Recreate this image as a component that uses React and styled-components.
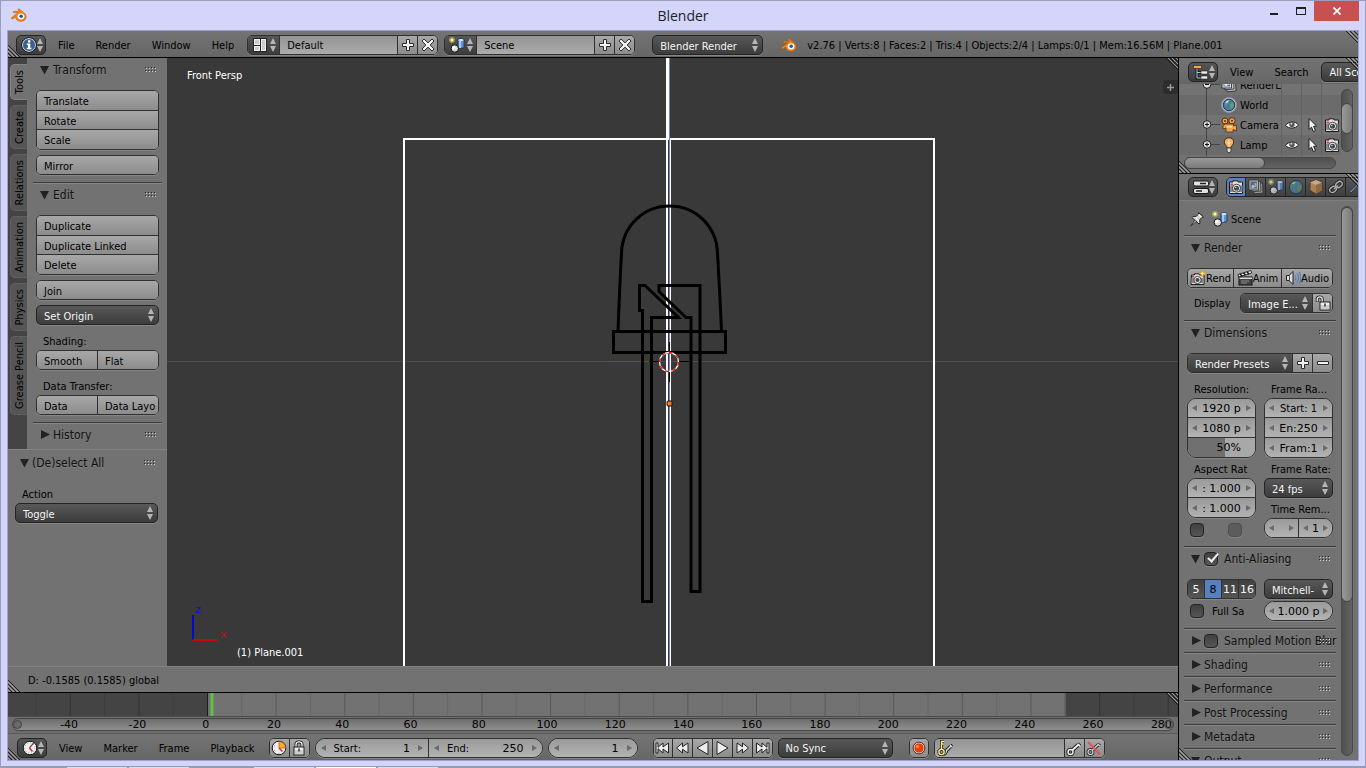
import { useState } from "react"
import styled, { createGlobalStyle, css } from "styled-components"

const condensed = '"DejaVu Sans Condensed", "DejaVu Sans", sans-serif'
const regular = '"DejaVu Sans", sans-serif'

const GlobalStyle = createGlobalStyle`
    * {
        box-sizing: border-box;
    }
    body {
        margin: 0;
        background: #d4d5fa;
        overflow: hidden;
    }
    button,
    input,
    select {
        margin: 0;
        padding: 0;
        border: 0;
        background: none;
        color: inherit;
        font: inherit;
        border-radius: 0;
        outline: none;
    }
    h1,
    h2,
    p {
        margin: 0;
        font-weight: normal;
    }
`

/* ---------- icons ---------- */

const Svg = styled.svg`
    display: block;
    flex: none;
    width: ${p => p.$w || 16}px;
    height: ${p => p.$h || 16}px;
`

const shapes = {
    info: (
        <>
            <circle cx='8' cy='8' r='6.5' fill='#3c5f92' stroke='#dfe6ef' />
            <circle cx='8' cy='8' r='7.4' fill='none' stroke='#111' strokeWidth='.7' />
            <path d='M7 3.3h2.3v2.2H7zM5.8 6.6h3.5v4.2h1.2v1.5H5.8v-1.5H7V8H5.8z' fill='#fff' />
        </>
    ),
    layout: (
        <>
            <rect x='1' y='1' width='14' height='14' rx='1' fill='#222' />
            <path d='M2 2h6v6H2zM2 9h6v5H2zM9 2h5v12H9z' fill='#f0f0f0' />
            <path d='M3 3h4v4H3zM3 10h4v3H3zM10 3h3v10h-3z' fill='#cdcdcd' />
        </>
    ),
    scene: (
        <>
            <path d='M9 3c0-1.500 6-1.500 6 0v7c0 1.600-6 1.600-6 0z' fill='#5f93da' stroke='#182c4c' strokeWidth='.8' />
            <path d='M10 4h2v7h-2z' fill='#a6c8f4' />
            <ellipse cx='12' cy='3' rx='2.700' ry='1' fill='#dce9fa' />
            <circle cx='5.800' cy='11.500' r='3.700' fill='#ddd' stroke='#111' />
            <circle cx='4.700' cy='10.200' r='1.500' fill='#fff' />
            <circle cx='3' cy='3' r='3' fill='#c9c44f' opacity='.6' />
            <circle cx='3' cy='3' r='1.500' fill='#fffcb5' />
        </>
    ),
    blender: (
        <>
            <path
                d='M.6 10.600 7 5.700H2.800c-.9 0-.8-1.300 0-1.400h5.700L7.100 3c-.6-.6.4-1.600 1.200-1l5 4c3.200 2.700 2.200 7.700-2.600 8.300-3.400.4-5.900-1.500-6.200-4.300l-2.300 1.800c-1 .6-2.300-.4-1.600-1.200z'
                fill='#f28418'
                stroke='#b35508'
                strokeWidth='.5'
            />
            <ellipse cx='10' cy='9.400' rx='3.400' ry='3' fill='#fff' />
            <ellipse cx='10.200' cy='9.300' rx='1.800' ry='1.700' fill='#1f5899' />
        </>
    ),
    tree: (
        <>
            <path d='M4 4v10h4M4 8.500h4' stroke='#1a1a1a' strokeWidth='3' fill='none' />
            <path d='M4 4v10h5M4 8.500h5' stroke='#a9c7e8' fill='none' />
            <rect x='.5' y='1.500' width='8' height='3' fill='#f3a64d' stroke='#222' strokeWidth='.6' />
            <rect x='8' y='7' width='6.500' height='3' fill='#eee' stroke='#222' strokeWidth='.6' />
            <rect x='8' y='12' width='6.500' height='3' fill='#eee' stroke='#222' strokeWidth='.6' />
        </>
    ),
    sliders: (
        <>
            <rect x='.5' y='2' width='15' height='5' rx='1.500' fill='#e2e2e2' stroke='#171717' />
            <rect x='.5' y='9.500' width='15' height='5' rx='1.500' fill='#e2e2e2' stroke='#171717' />
            <path d='M7 4.500h6M3 12h6' stroke='#222' strokeWidth='1.600' />
        </>
    ),
    globe: (
        <>
            <circle cx='8' cy='8' r='6.600' fill='#4c7fb5' stroke='#20303f' />
            <path d='M3 5c1.500-2 4-2.500 5-2l-1 2-2 1v2L3.500 9C2.600 8 2.500 6 3 5zM9 7l3-1.500 2 2-1 3-2.500 2.500L9 10zM5 10l2 1v2l-2-.5z' fill='#5f9a55' />
            <path d='M4 5c1-1.500 2.500-2 3.500-2.200L6 5z' fill='#e9f2f5' opacity='.8' />
        </>
    ),
    world: (
        <>
            <circle cx='8' cy='8' r='7.500' fill='#b9bbd0' stroke='#8e91aa' />
            <circle cx='8' cy='8' r='5.800' fill='#4679a8' stroke='#253c54' />
            <path d='M4 5.500c1.500-2 3.500-2.200 4.500-1.800L7 6 5.500 7l.5 2-1.500.5zM9 7l2.500-1.500L13 8l-1.500 3L9.500 12z' fill='#68a25a' />
            <path d='M4.300 5.800C5.500 4 7 3.500 8 3.500L6.500 5.500z' fill='#fff' />
        </>
    ),
    movie: (
        <>
            <circle cx='4' cy='4' r='3' fill='#eaa056' stroke='#53300b' />
            <circle cx='11' cy='3.800' r='3.200' fill='#eaa056' stroke='#53300b' />
            <path d='M4.500 7h8v2l3-1v6l-3.500-1.500V15h-7v-4L2 12V8.500z' fill='#f1a452' stroke='#53300b' strokeWidth='.8' />
            <path d='M6 9h5v1.500H6z' fill='#ffdcae' />
            <circle cx='4' cy='4' r='1' fill='#5b3510' />
            <circle cx='11' cy='3.800' r='1' fill='#5b3510' />
        </>
    ),
    lamp: (
        <>
            <path d='M8 .7c-3 0-5 2.200-4.700 4.800C3.500 8 6 8.500 6 11h4c0-2.500 2.500-3 2.700-5.500C13 2.900 11 .7 8 .7z' fill='#f1b169' stroke='#4b2c0b' />
            <path d='M8 2.500v7M6 5l2 2 2-2' stroke='#fde7c7' fill='none' />
            <path d='M6 11h4v3l-1 1.500H7L6 14z' fill='#ddd' stroke='#333' strokeWidth='.8' />
        </>
    ),
    cube: (
        <>
            <path d='m8 1 6 2.500v8L8 15l-6-3.500v-8z' fill='#d8985a' stroke='#3c2711' strokeWidth='.8' />
            <path d='m8 1 6 2.500L8 6 2 3.500z' fill='#f3d0a5' />
            <path d='M8 6v9l6-3.500v-8z' fill='#b0773c' />
        </>
    ),
    eye: (
        <>
            <path d='M1.500 8.500C4 4.500 11.500 3.500 14.500 8 11 12 5 12 1.500 8.500z' fill='#f5f5f5' stroke='#222' />
            <circle cx='8' cy='7.600' r='2.700' fill='#555' />
            <circle cx='7.400' cy='6.800' r='1' fill='#ddd' />
        </>
    ),
    pointer: <path d='M5 1.500v11l2.500-2.300 1.800 4.300 2.200-1-1.900-4.100 3-.4z' fill='#f3f3f3' stroke='#1d1d1d' />,
    photo: (
        <>
            <path d='M2 3h3V1.800h5V3h4.500v11.500h-13V3z' fill='#ddd' stroke='#1c1c1c' />
            <path d='M2 6.500h12.500V13H2z' fill='#888' />
            <circle cx='8.500' cy='9.200' r='4' fill='#eee' stroke='#222' strokeWidth='.8' />
            <circle cx='8.500' cy='9.200' r='2.500' fill='#40474f' />
            <circle cx='7.800' cy='8.500' r='.8' fill='#b5c6d6' />
            <path d='M2.500 4.500h2.500v1.800H2.500z' fill='#e33' />
        </>
    ),
    photoNew: (
        <>
            <path d='M1.500 5h3V3.800h5V5H14v9.500H1z' fill='#ddd' stroke='#1c1c1c' />
            <path d='M1.500 8h12v5h-12z' fill='#888' />
            <circle cx='7.500' cy='10' r='3.600' fill='#eee' stroke='#222' strokeWidth='.8' />
            <circle cx='7.500' cy='10' r='2.100' fill='#40474f' />
            <path d='M2 6h2v1.600H2z' fill='#e33' />
            <path d='m12.500 0 1 2.500L16 3.500l-2.500 1-1 2.500-1-2.500-2.500-1 2.500-1z' fill='#ffeb75' stroke='#d69b1d' strokeWidth='.8' />
        </>
    ),
    images: (
        <>
            <path d='m5 5 9.500-1L15 14l-9 .8z' fill='#bbb' stroke='#222' strokeWidth='.8' />
            <path d='m3.500 3 9-.5.5 9.500-9 .8z' fill='#ccc' stroke='#222' strokeWidth='.8' />
            <rect x='1' y='1' width='9.500' height='10' fill='#ddd' stroke='#222' strokeWidth='.8' />
            <rect x='2.500' y='2.500' width='6.500' height='7' fill='#55789c' />
            <circle cx='5' cy='7.500' r='1.600' fill='#eee' />
            <path d='M6.500 4H8.500v4h-2z' fill='#b3d1f1' />
        </>
    ),
    link: (
        <>
            <g fill='none' stroke='#191919' strokeWidth='3.600'>
                <rect x='7.500' y='3' width='7' height='5' rx='2.500' transform='rotate(-38 11 5.500)' />
                <rect x='1.500' y='8' width='7' height='5' rx='2.500' transform='rotate(-38 5 10.500)' />
            </g>
            <g fill='none' stroke='#d5d5d5' strokeWidth='1.400'>
                <rect x='7.500' y='3' width='7' height='5' rx='2.500' transform='rotate(-38 11 5.500)' />
                <rect x='1.500' y='8' width='7' height='5' rx='2.500' transform='rotate(-38 5 10.500)' />
                <path d='m6 10 4-3.500' />
            </g>
        </>
    ),
    wrench: (
        <path
            d='M3 1v3.500L5 6.500l1.500-.3L14 14l1.500-1.500L8 5.500 8.200 3 6 1v3L4.500 4z'
            fill='#86a6d2'
            stroke='#1b2430'
            strokeWidth='.8'
            transform='matrix(-1 0 0 1 17 0)'
        />
    ),
    pin: (
        <>
            <path d='m1.500 15 5-6.500 1.800 1.500z' fill='#ddd' stroke='#222' strokeWidth='.8' />
            <path d='m9.500 1.500 5 4.500-1.800.5-2 2.300.3 3.400-1 .8L3 6.500l1-1 3.300-.2L9.500 3z' fill='#d3d3d3' stroke='#222' />
            <path d='m9.500 3.500 3 2.600M6.500 6.500l3 3' stroke='#fff' />
        </>
    ),
    clapper: (
        <>
            <path d='m1 4.500 13-4 .6 2.600-13 4z' fill='#eee' stroke='#111' strokeWidth='.8' />
            <path d='m3 4 2 2M6.500 3l2 2M10 2l2 2' stroke='#111' strokeWidth='1.600' />
            <rect x='2' y='7' width='13' height='8' fill='#444' stroke='#111' />
            <path d='M2.500 7.500H15V9H2.500z' fill='#ddd' />
            <path d='M4 11h8M4 13h6' stroke='#8a8a8a' />
        </>
    ),
    speaker: (
        <>
            <path d='M1.500 5.500h2.500l4-4v13l-4-4H1.500z' fill='#ddd' stroke='#222' />
            <path d='M4.500 5v6' stroke='#555' />
            <path d='M10 5.500c1 1.500 1 3.500 0 5M12 3.500c2 2.800 2 6.200 0 9M14 1.800c2.500 4 2.500 8.400 0 12.400' stroke='#4f82c9' strokeWidth='1.200' fill='none' />
        </>
    ),
    unlock: (
        <>
            <path d='M2.200 7V4.200c0-3 5-3 5 0V7' fill='none' stroke='#222' strokeWidth='3' />
            <path d='M2.200 6.500V4.200c0-3 5-3 5 0V7' fill='none' stroke='#eee' strokeWidth='1.300' />
            <rect x='5' y='7' width='10' height='8' fill='#eee' stroke='#222' />
            <path d='M6 11h8M6 13h8' stroke='#aaa' />
            <path d='M10 8.500v3' stroke='#333' strokeWidth='1.500' />
        </>
    ),
    lock: (
        <>
            <path d='M5 8V4.500c0-3.500 6-3.500 6 0V8' fill='none' stroke='#222' strokeWidth='3' />
            <path d='M5 8V4.500c0-3.500 6-3.500 6 0V8' fill='none' stroke='#eee' strokeWidth='1.300' />
            <rect x='3' y='7' width='10' height='8' fill='#eee' stroke='#222' />
            <path d='M4 11h8M4 13h8' stroke='#aaa' />
            <path d='M8 8.500v3' stroke='#333' strokeWidth='1.500' />
        </>
    ),
    clock: (
        <>
            <circle cx='8' cy='8' r='6.800' fill='#efefef' stroke='#181818' />
            <circle cx='8' cy='8' r='5.200' fill='none' stroke='#9a9a9a' strokeDasharray='1 2' />
            <path d='M11.500 3 7.500 8' stroke='#333' strokeWidth='1.200' fill='none' />
            <path d='m7.500 8 3 3.500' stroke='#d22' strokeWidth='1.400' />
        </>
    ),
    clockRange: (
        <>
            <circle cx='8' cy='8' r='6.800' fill='#efefef' stroke='#181818' />
            <path d='M8 8V1.500A6.500 6.500 0 0 1 14.500 8z' fill='#ffae22' stroke='#8c5505' strokeWidth='.6' />
            <path d='m8 8 3.500 3.500' stroke='#d22' strokeWidth='1.400' />
            <path d='M3.500 5.500v.8M3.500 10v.8M8 13v1' stroke='#888' />
        </>
    ),
    record: (
        <>
            <circle cx='8' cy='8' r='5.200' fill='#e64008' stroke='#f0ddd4' />
            <circle cx='8' cy='8' r='5.900' fill='none' stroke='#3a1407' strokeWidth='.8' />
            <circle cx='6.500' cy='6.500' r='1.600' fill='#ff8d55' />
        </>
    ),
    key: (
        <>
            <path d='m6 10.500 6.500-6m-1-.5 2.500 2' stroke='#222' strokeWidth='3.800' />
            <circle cx='4.500' cy='12' r='2.500' fill='none' stroke='#222' strokeWidth='3.400' />
            <path d='m6 10.500 6.500-6m-1-.5 2.500 2' stroke='#eee' strokeWidth='1.800' />
            <circle cx='4.500' cy='12' r='2.500' fill='none' stroke='#eee' strokeWidth='1.400' />
        </>
    ),
    keys: (
        <>
            <path d='M7 14c2 0 1.500-2 3-4l4-4m-1-1 2 2' stroke='#222' strokeWidth='3.600' fill='none' />
            <path d='M7 14c2 0 1.500-2 3-4l4-4m-1-1 2 2' stroke='#ddd' strokeWidth='1.500' fill='none' />
            <path d='M4.500 9.500V1.500h2.500M4.500 4h2' stroke='#3a3410' strokeWidth='3' fill='none' />
            <circle cx='4.500' cy='12' r='2.600' fill='none' stroke='#3a3410' strokeWidth='3.200' />
            <path d='M4.500 9.500V1.500h2.500M4.500 4h2' stroke='#efe69a' strokeWidth='1.300' fill='none' />
            <circle cx='4.500' cy='12' r='2.600' fill='none' stroke='#efe69a' strokeWidth='1.400' />
        </>
    ),
    keyOff: (
        <>
            <path d='m6 10.500 6.500-6m-1-.5 2.500 2' stroke='#333' strokeWidth='3.200' />
            <circle cx='4.500' cy='12' r='2.500' fill='none' stroke='#333' strokeWidth='3' />
            <path d='m6 10.500 6.500-6m-1-.5 2.500 2' stroke='#ccc' strokeWidth='1.500' />
            <circle cx='4.500' cy='12' r='2.500' fill='none' stroke='#ccc' strokeWidth='1.200' />
            <path d='m2 2 12 12.500' stroke='#e0555a' strokeWidth='2' />
        </>
    ),
    plus: <path d='M6.500 2.500h3v4h4v3h-4v4h-3v-4h-4v-3h4z' fill='#f2f2f2' stroke='#2a2a2a' />,
    minus: <path d='M2.500 6.500h11v3h-11z' fill='#f2f2f2' stroke='#2a2a2a' />,
    cross: <path d='m4 2 4 3.800L12 2l2 2-3.800 4 3.800 4-2 2-4-3.800L4 14l-2-2 3.800-4L2 4z' fill='#f2f2f2' stroke='#2a2a2a' />,
    first: <path d='M1 3h2v4.300L8 3v4L13.500 3v10L8 9v4L3 8.700V13H1z' />,
    back: <path d='M7.500 3v3.800L13 3v10L7.500 9.200V13L1.500 8z' />,
    reverse: <path d='M13 1.500v13L2 8z' />,
    play: <path d='M3 1.500v13L14 8z' />,
    forward: <path d='M8.500 3v3.800L3 3v10l5.500-3.800V13l6-5z' />,
    last: <path d='M15 3h-2v4.300L8 3v4L2.500 3v10L8 9v4l5-4.300V13h2z' />,
}

const transport = ["first", "back", "reverse", "play", "forward", "last"]

function Icon({ name }) {
    return (
        <Svg viewBox='0 0 16 16' aria-hidden='true' fill='#ededed' stroke={transport.includes(name) ? "#222" : "none"}>
            {shapes[name]}
        </Svg>
    )
}

const UpDown = () => (
    <Svg viewBox='0 0 6 14' $w={6} $h={14} fill='#b5b5b5' aria-hidden='true'>
        <path d='M3 0l3 6H0zM3 14l3-6H0z' />
    </Svg>
)

const Triangle = ({ open }) => (
    <Svg viewBox='0 0 10 10' $w={10} $h={10} fill='#222' aria-hidden='true'>
        <path d={open ? "M0 1h9L4.500 9.500z" : "M1 0l9 4.500L1 9z"} />
    </Svg>
)

const Arrow = ({ right }) => (
    <Svg viewBox='0 0 5 6' $w={5} $h={6} fill='#6a6a6a' aria-hidden='true'>
        <path d={right ? "M0 0l5 3-5 3z" : "M5 0L0 3l5 3z"} />
    </Svg>
)

const Dots = () => (
    <Svg viewBox='0 0 12 6' $w={12} $h={6} aria-hidden='true'>
        {[0, 3, 6, 9].map(x =>
            [0, 3].map(y => (
                <g key={`${x}-${y}`}>
                    <rect x={x} y={y} width='1' height='1' fill='#2c2c2c' />
                    <rect x={x + 1} y={y + 1} width='1' height='1' fill='#d0d0d0' />
                </g>
            ))
        )}
    </Svg>
)

const GripSvg = styled.svg`
    position: absolute;
    width: 12px;
    height: 12px;
    z-index: 2;
    ${p => (p.$top ? "top: 0; right: 0;" : "bottom: 0; left: 0;")}
`

const Grip = ({ top }) => (
    <GripSvg viewBox='0 0 12 12' $top={top} aria-hidden='true'>
        <path d={top ? "M0 0l12 12M4 0l8 8M8 0l4 4" : "M0 0l12 12M0 4l8 8M0 8l4 4"} stroke='#1c1c1c' strokeWidth='.9' />
        <path d={top ? "M2 0l10 10M6 0l6 6M10 0l2 2" : "M0 2l10 10M0 6l6 6M0 10l2 2"} stroke='#a6a6a6' strokeWidth='.9' />
    </GripSvg>
)

/* ---------- controls ---------- */

const lightFill = "linear-gradient(#a8a8a8, #8c8c8c)"
const darkFill = "linear-gradient(#404040, #565656)"
const fieldFill = "linear-gradient(#9a9a9a, #b3b3b3)"
const outline = "#303030"

const Group = styled.div`
    display: flex;
    flex-direction: ${p => (p.$column ? "column" : "row")};
    flex: ${p => (p.$grow ? "1 1 0" : "none")};
    min-width: 0;
    width: ${p => (p.$width ? `${p.$width}px` : "auto")};
    border: 1px solid ${outline};
    border-radius: ${p => p.$radius || 5}px;
    overflow: hidden;
    box-shadow: 0 1px 0 #858585;
    background: #999;

    & > * + * {
        ${p => (p.$column ? "border-top" : "border-left")}: 1px solid ${outline};
    }
`

const Btn = styled.button`
    display: flex;
    align-items: center;
    justify-content: ${p => (p.$center ? "center" : "flex-start")};
    flex: ${p => (p.$width ? `0 0 ${p.$width}px` : `${p.$grow || 1} 1 0`)};
    min-width: 0;
    height: 18px;
    padding: ${p => (p.$center ? "0" : "2px 0 0 7px")};
    white-space: nowrap;
    overflow: hidden;
    color: #000;
    background: ${lightFill};
`

const Stack = styled(Group)`
    & > button {
        flex: none;
        height: 19px;
    }
    & > button:last-child {
        height: 20px;
    }
`

const MenuBox = styled.label`
    position: relative;
    display: flex;
    align-items: center;
    flex: ${p => (p.$width ? `0 0 ${p.$width}px` : "1 1 0")};
    min-width: 0;
    height: ${p => (p.$inner ? 18 : 20)}px;
    padding-right: 4px;
    color: #f4f4f4;
    background: linear-gradient(#585858, #3c3c3c);
    border: ${p => (p.$inner ? "0" : "1px solid #242424")};
    border-radius: ${p => (p.$inner ? 0 : 5)}px;
    box-shadow: ${p => (p.$inner ? "none" : "0 1px 0 #858585")};

    & > select {
        flex: 1;
        min-width: 0;
        height: 100%;
        padding: 2px 0 0 7px;
        appearance: none;
        text-overflow: clip;
    }
`

function Menu({ label, value, width, inner }) {
    return (
        <MenuBox $width={width} $inner={inner}>
            <select aria-label={label} defaultValue={value}>
                <option>{value}</option>
            </select>
            <UpDown />
        </MenuBox>
    )
}

const EditorButton = styled.button`
    display: flex;
    align-items: center;
    justify-content: space-between;
    flex: none;
    width: ${p => (p.$inner ? 31 : 30)}px;
    height: ${p => (p.$inner ? 18 : 20)}px;
    padding: 0 3px 0 4px;
    border: ${p => (p.$inner ? "0" : "1px solid #242424")};
    border-radius: ${p => (p.$inner ? 0 : 5)}px;
    background: linear-gradient(#565656, #3c3c3c);
`

const Editor = ({ icon, label, inner }) => (
    <EditorButton aria-label={label} $inner={inner}>
        <Icon name={icon} />
        <UpDown />
    </EditorButton>
)

const TextField = styled.input`
    flex: 1;
    min-width: 0;
    height: 18px;
    padding: 1px 0 0 7px;
    color: #000;
    background: linear-gradient(#939393, #acacac);
`

const FieldBox = styled.label`
    display: flex;
    align-items: center;
    flex: 1 1 0;
    min-width: 0;
    height: 18px;
    padding: 0 ${p => (p.$wide ? 5 : 4)}px;
    gap: ${p => (p.$wide ? 8 : 1)}px;
    background: ${fieldFill};
    color: #000;
    white-space: nowrap;

    & > input {
        flex: 1;
        width: 0;
        min-width: 0;
        height: 100%;
        padding-top: 1px;
        text-align: ${p => (p.$center ? "center" : "right")};
        font-family: ${p => (p.$text ? condensed : regular)};
    }
    & > span {
        padding-top: 1px;
    }
`

function NumField({ label, name, value, wide, center, text }) {
    return (
        <FieldBox $wide={wide} $center={center} $text={text}>
            <Arrow />
            {label && <span>{label}</span>}
            <input aria-label={name || label} defaultValue={value} />
            <Arrow right />
        </FieldBox>
    )
}

const NumStack = styled(Group)`
    & > label {
        flex: none;
        height: 20px;
    }
    & > label:first-child {
        height: 18px;
    }
    & > label:last-child {
        height: ${p => (p.$two ? 20 : 20)}px;
    }
`

const SliderBox = styled.label`
    position: relative;
    display: flex;
    font-family: ${regular};
    color: #000;

    & > input {
        appearance: none;
        width: 100%;
        height: 100%;
        background: linear-gradient(90deg, #707070 55%, #a8a8a8 55%);
    }
    & > input::-webkit-slider-thumb {
        appearance: none;
        width: 1px;
        height: 1px;
    }
    & > span {
        position: absolute;
        right: 14px;
        top: 3px;
        line-height: 14px;
        pointer-events: none;
    }
`

const Tick = styled.input`
    appearance: none;
    flex: none;
    width: 14px;
    height: 14px;
    border: 1px solid ${p => (p.disabled ? "#4e4e4e" : "#222")};
    border-radius: 4px;
    background: ${p => (p.disabled ? "#5c5c5c" : darkFill)};
    box-shadow: 0 1px 0 #858585;

    &:checked::after {
        content: "";
        display: block;
        width: 4px;
        height: 9px;
        margin: -2px 0 0 5px;
        border: solid #eee;
        border-width: 0 2px 2px 0;
        transform: rotate(40deg);
    }
`

const Row = styled.div`
    display: flex;
    align-items: center;
    height: 20px;
`

const Caption = styled.p`
    height: 20px;
    padding-left: 7px;
    line-height: 23px;
    white-space: nowrap;
    color: #000;
`

/* ---------- collapsible panels ---------- */

const PanelBox = styled.section`
    border-top: ${p => (p.$first ? 0 : 1)}px solid #3b3b3b;
    box-shadow: ${p => (p.$first ? "none" : "inset 0 1px 0 #888")};
`

const PanelHead = styled.div`
    display: flex;
    align-items: center;
    gap: 3px;
    height: ${p => (p.$tall ? 24 : 23)}px;
    padding: 0 5px 0 7px;

    & > button {
        display: flex;
        align-items: center;
        flex: none;
        width: 10px;
        height: 20px;
    }
    & > input {
        margin-right: 3px;
    }
    & > h2 {
        flex: 1;
        width: 0;
        font-size: 12px;
        line-height: 20px;
        white-space: nowrap;
        color: #111;
        text-shadow: 0 1px 0 #808080;
    }
`

const PanelBody = styled.div`
    display: flex;
    flex-direction: column;
    gap: ${p => p.$gap || 5}px;
    padding: 8px 3px 7px;
`

function Panel({ title, first, check, gap, defaultOpen, children }) {
    const [open, setOpen] = useState(!!defaultOpen)
    return (
        <PanelBox $first={first}>
            <PanelHead $tall={first || open}>
                <button aria-label={title} aria-expanded={open} onClick={() => setOpen(!open)}>
                    <Triangle open={open} />
                </button>
                {check && <Tick type='checkbox' aria-label={title} defaultChecked={check === "on"} />}
                <h2>{title}</h2>
                <Dots />
            </PanelHead>
            {open && children && <PanelBody $gap={gap}>{children}</PanelBody>}
        </PanelBox>
    )
}

/* ---------- window frame ---------- */

const Window = styled.div`
    display: flex;
    flex-direction: column;
    height: 100vh;
    font-family: ${condensed};
    font-size: 11px;
    color: #000;
    background: #d4d5fa;
`

const Frame = styled.div`
    display: flex;
    flex-direction: column;
    flex: 1;
    min-height: 0;
    border: 1px solid #9c9dbb;
    border-bottom: 0;
    padding: 0 6px 5px;
`

const TitleBar = styled.header`
    display: grid;
    grid-template-columns: 1fr auto 1fr;
    flex: none;
    height: 29px;

    & > h1 {
        font-family: "Open Sans", "Noto Sans", sans-serif;
        font-size: 14px;
        line-height: 29px;
        color: #1d1d26;
    }
    & > svg {
        margin: 6px 0 0 4px;
    }
`

const WindowButtons = styled.div`
    display: flex;
    justify-content: flex-end;

    & > button {
        display: flex;
        align-items: center;
        justify-content: center;
        width: 27px;
        height: 20px;
    }
    & > button:last-child {
        width: 45px;
        background: #c75050;
    }
`

const AppFrame = styled.main`
    display: flex;
    flex-direction: column;
    flex: 1;
    min-height: 0;
    border: 1px solid #a0a1cc;
    background: #727272;
`

const Bar = styled.div`
    position: relative;
    display: flex;
    align-items: center;
    flex: none;
    height: ${p => (p.$line ? 27 : 26)}px;
    padding: ${p => p.$top || 0}px 0 0 ${p => p.$pad || 8}px;
    border-bottom: ${p => (p.$line ? 1 : 0)}px solid #000;
    background: linear-gradient(#747474, #666);
    overflow: hidden;
`

const MenuItems = styled.nav`
    display: flex;
    gap: ${p => p.$gap}px;
    padding: 0 ${p => p.$after}px 0 12px;

    & > button {
        height: 20px;
        padding-top: 1px;
        white-space: nowrap;
    }
`

const Spaced = styled.div`
    display: flex;
    flex: none;
    margin-left: ${p => p.$left}px;
`

const Status = styled.p`
    padding: 1px 0 0 10px;
    white-space: nowrap;
`

const Taskbar = styled.footer`
    display: flex;
    align-items: flex-end;
    gap: 2px;
    flex: none;
    height: 2px;
    padding-left: 67px;
    background: #9a9ab6;

    & > i {
        width: 60px;
        height: 1px;
        background: ${p => p.theme.tab || "#dcdcec"};
    }
    & > i:nth-child(3) {
        margin-left: 63px;
    }
    & > i:nth-child(4) {
        background: #fff;
    }
`

const Workspace = styled.div`
    display: flex;
    flex: 1;
    min-height: 0;
`

const MainArea = styled.div`
    display: flex;
    flex-direction: column;
    flex: 1;
    min-width: 0;
    border-right: 1px solid #000;
`

const EditArea = styled.div`
    display: flex;
    flex: 1;
    min-height: 0;
`

/* ---------- tool shelf ---------- */

const Shelf = styled.aside`
    display: flex;
    flex-direction: column;
    flex: none;
    width: 159px;
    background: #727272;
`

const ShelfTop = styled.div`
    display: flex;
    border-bottom: 1px solid #848484;
`

const Tabs = styled.div`
    display: flex;
    flex-direction: column;
    gap: 5px;
    flex: none;
    width: 19px;
    padding: 6px 0 0 2px;
    background: #444;
`

const Tab = styled.button`
    display: flex;
    align-items: center;
    justify-content: center;
    height: ${p => p.$length}px;
    padding-left: 1px;
    border: 1px solid ${p => (p.$active ? "#848484" : "#606060")};
    border-right: 0;
    border-radius: 5px 0 0 5px;
    background: ${p => (p.$active ? "#727272" : "#555")};

    & > span {
        writing-mode: vertical-rl;
        transform: rotate(180deg);
        line-height: 16px;
        white-space: nowrap;
    }
`

const ShelfPanels = styled.div`
    flex: 1;
    min-width: 0;
    padding: 0 5px 3px 6px;
`

const Operator = styled.div`
    padding: 1px 6px 0 4px;

    & button[aria-expanded] {
        margin-left: 1px;
    }
    & h2 {
        margin-left: -1px;
    }
`

/* ---------- 3D viewport ---------- */

const Viewport = styled.section`
    position: relative;
    flex: 1;
    min-width: 0;
    background: #393939;
    color: #fff;
    overflow: hidden;

    & > svg:first-child {
        display: block;
        width: 100%;
        height: 100%;
    }
`

const ViewName = styled.p`
    position: absolute;
    top: 11px;
    left: 20px;
    line-height: 14px;
`

const ObjectName = styled.p`
    position: absolute;
    bottom: 6px;
    left: 70px;
    line-height: 14px;
`

const RegionToggle = styled.button`
    position: absolute;
    top: 22px;
    right: 0;
    display: flex;
    align-items: center;
    justify-content: center;
    width: 15px;
    height: 14px;
    border-radius: 4px 0 0 4px;
    background: #2c2c2c;
`

const AxisName = styled.text`
    font-family: ${regular};
    font-size: 11px;
`

function Drawing() {
    return (
        <svg viewBox='0 0 1011 608' preserveAspectRatio='xMidYMid slice' aria-label='LED model'>
            <path d='M0 303.500h1011' stroke='#505050' />
            <path d='M442 303.500h40' stroke='#168016' />
            <g fill='none' stroke='#fff' strokeWidth='2'>
                <path d='M237 608V81h530v527' />
                <path d='M500 81v527' />
            </g>
            <path d='M500.500 0v81' stroke='#fff' strokeWidth='3' />
            <path d='M502.500 0v608' stroke='#7d7dd0' />
            <path d='M503.500 82v526' stroke='#fff' />
            <g fill='none' stroke='#000' strokeWidth='3'>
                <path d='M451 273.500c1-26 2-52 3.500-78.500 1-27 22-47 48-47s47 20 48 47c1.500 26.500 3 52.500 4 78.500' />
                <path d='M446.500 273.500h112v21h-112z' />
                <path d='M472.500 252.500v-25h5.500l33.500 32h-27v284h-9v-291z' />
                <path d='M533 227.500h-41v6l27 26h5v274h9z' />
            </g>
            <path d='M482 303.500h10M512 303.500h10M502.500 284v10M502.500 314v10' stroke='#000' />
            <circle cx='502' cy='304' r='9.500' fill='none' stroke='#fff' strokeWidth='1.300' />
            <circle cx='502' cy='304' r='9.500' fill='none' stroke='#f01010' strokeWidth='1.300' strokeDasharray='3.700 3.700' />
            <rect x='500' y='343' width='5' height='5' rx='1' fill='#f27c22' stroke='#1b0d02' />
            <path d='M26 557v25' stroke='#0808c8' strokeWidth='2' />
            <path d='M26 582h25' stroke='#c80808' strokeWidth='2' />
            <AxisName x='28' y='555' fill='#1010c8'>
                z
            </AxisName>
            <AxisName x='53' y='580' fill='#c01010'>
                x
            </AxisName>
        </svg>
    )
}

/* ---------- timeline ---------- */

const Track = styled.svg`
    display: block;
    width: 100%;
    height: 23px;
    background: #727272;
`

const Timeline = styled.section`
    position: relative;
    flex: none;
    border-top: 1px solid #000;
`

const Ruler = styled.div`
    position: relative;
    height: 18px;
    padding: 1px 4px 3px;
    background: #6e6e6e;
    border-top: 1px solid #4b4b4b;
    border-bottom: 1px solid #5a5a5a;
`

const RulerBar = styled.div`
    display: flex;
    align-items: center;
    height: 13px;
    padding-left: 22px;
    border: 1px solid #444;
    border-radius: 7px;
    background: linear-gradient(#6e6e6e, #8e8e8e);
    font-family: ${regular};
    overflow: hidden;

    & > span {
        flex: 0 0 6%;
        text-align: center;
        line-height: 12px;
    }
`

const Knob = styled.i`
    position: absolute;
    top: 3px;
    ${p => p.$side}: 5px;
    width: 9px;
    height: 9px;
    border: 1px solid #444;
    border-radius: 50%;
    background: ${p => (p.$side === "left" ? "#6a6a6a" : "none")};
`

const KeyField = styled.label`
    display: flex;
    align-items: center;
    flex: 1;
    min-width: 0;
    height: 18px;
    padding-left: 2px;
    background: linear-gradient(#939393, #acacac);

    & > input {
        flex: 1;
        min-width: 0;
    }
`

const firstFrame = -58
const frameSpan = 341
const at = frame => `${((frame - firstFrame) / frameSpan) * 100}%`
const gridFrames = Array.from({ length: 34 }, (_, i) => i * 10 - 50)
const labelFrames = Array.from({ length: 17 }, (_, i) => i * 20 - 40)

/* ---------- outliner and properties ---------- */

const Side = styled.aside`
    display: flex;
    flex-direction: column;
    flex: none;
    width: 179px;
    min-height: 0;
`

const Outliner = styled.section`
    position: relative;
    flex: none;
    border-bottom: 1px solid #000;
    padding-bottom: 4px;
`

const OutlinerBody = styled.div`
    display: flex;
    height: 72px;
`

const TreeList = styled.div`
    flex: 1;
    height: 72px;
    min-width: 0;
    overflow: hidden;

    & > div:first-child {
        margin-top: -9px;
    }
`

const TreeRow = styled.div`
    display: grid;
    grid-template-columns: 41px 61px 20px 20px 20px;
    align-items: center;
    height: 20px;
    background: ${p => (p.$odd ? "#6b6b6b" : "#737373")};

    & > * {
        height: 20px;
        display: flex;
        align-items: center;
        justify-content: center;
        min-width: 0;
    }
    & > button {
        border-left: 1px solid #626262;
    }
`

const Expander = styled.svg`
    width: 41px;
    height: 20px;
`

const TreeLabel = styled.div`
    && {
        justify-content: flex-start;
        gap: 3px;
        padding-left: 1px;
        white-space: nowrap;
        overflow: hidden;
    }
`

const ScrollV = styled.div`
    flex: none;
    width: 12px;
    margin: 5px 5px 4px 0;
    border: 1px solid #484848;
    border-radius: 6px;
    background: linear-gradient(90deg, #505050, #636363);
    display: flex;
    flex-direction: column;

    & > i {
        height: ${p => p.$thumb};
        margin: ${p => p.$offset || 0}px -1px 0;
        border: 1px solid #444;
        border-radius: 6px;
        background: linear-gradient(90deg, #999, #7b7b7b);
    }
`

const ScrollH = styled.div`
    height: 12px;
    margin: 1px 22px 0 5px;
    border: 1px solid #484848;
    border-radius: 6px;
    background: linear-gradient(#505050, #636363);

    & > i {
        display: block;
        width: 54%;
        height: 12px;
        margin: -1px;
        border: 1px solid #444;
        border-radius: 6px;
        background: linear-gradient(#999, #7b7b7b);
    }
`

const Properties = styled.section`
    position: relative;
    display: flex;
    flex-direction: column;
    flex: 1;
    min-height: 0;
`

const PropsBody = styled.div`
    display: flex;
    flex: 1;
    min-height: 0;
    border-top: 1px solid #7d7d7d;
`

const PropsList = styled.div`
    flex: 1;
    min-width: 0;
    overflow: hidden;
    padding: 0 5px;
`

const Crumb = styled.div`
    display: flex;
    align-items: center;
    height: 34px;
    padding: 2px 0 0 5px;
    gap: 7px;

    & > span {
        margin-left: -4px;
    }
`

const TabStrip = styled.div`
    display: flex;
    flex: none;
    margin-left: 8px;
    height: 20px;
    border: 1px solid #222;
    border-radius: 5px 0 0 5px;
    overflow: hidden;

    & > button {
        display: flex;
        align-items: center;
        justify-content: center;
        flex: none;
        width: 20px;
        border-right: 1px solid #262626;
        background: linear-gradient(#565656, #404040);
    }
    & > button > svg {
        opacity: 0.7;
    }
    & > button:first-child {
        width: 19px;
        background: #5680c2;
    }
    & > button:first-child > svg {
        opacity: 1;
    }
`

const TwoColumns = styled.div`
    display: grid;
    grid-template-columns: 1fr 1fr;
    column-gap: 8px;

    & > div {
        min-width: 0;
    }
`

const ChoiceButton = styled.button`
    flex: 1;
    height: 18px;
    min-width: 0;
    padding-top: 1px;
    font-family: ${regular};
    ${p =>
        p.$active
            ? css`
                  background: #5680c2;
                  color: #000;
              `
            : css`
                  background: ${darkFill};
                  color: #f5f5f5;
              `}
`

const DisplayLabel = styled.span`
    flex: none;
    width: 53px;
    padding: 1px 0 0 7px;
`

const TickRow = styled.div`
    display: flex;
    gap: 24px;
    height: 21px;
    padding: 5px 0 0 3px;
`

const TickLabel = styled.label`
    display: flex;
    align-items: center;
    gap: 8px;
    height: 20px;
    padding-left: 3px;
    white-space: nowrap;
`

const OperatorLine = styled.p`
    position: relative;
    flex: none;
    height: 26px;
    padding-left: 20px;
    line-height: 27px;
    border-top: 1px solid #828282;
    background: #727272;
`

const shelfTabs = [
    ["Tools", 36],
    ["Create", 44],
    ["Relations", 57],
    ["Animation", 62],
    ["Physics", 48],
    ["Grease Pencil", 79],
]

const treeRows = [
    { name: "Render layers", text: "RenderL", icon: "images", node: true },
    { name: "World", text: "World", icon: "world" },
    { name: "Camera", text: "Camera", icon: "movie", node: true, toggles: true },
    { name: "Lamp", text: "Lamp", icon: "lamp", node: true, toggles: true },
    { name: "Plane", icon: "cube" },
]

function ToolShelf() {
    return (
        <Shelf>
            <ShelfTop>
                <Tabs>
                    {shelfTabs.map(([name, length], i) => (
                        <Tab key={name} $length={length} $active={i === 0}>
                            <span>{name}</span>
                        </Tab>
                    ))}
                </Tabs>
                <ShelfPanels>
                    <Panel title='Transform' first defaultOpen>
                        <Stack $column>
                            <Btn>Translate</Btn>
                            <Btn>Rotate</Btn>
                            <Btn>Scale</Btn>
                        </Stack>
                        <Group>
                            <Btn>Mirror</Btn>
                        </Group>
                    </Panel>
                    <Panel title='Edit' defaultOpen>
                        <Stack $column>
                            <Btn>Duplicate</Btn>
                            <Btn>Duplicate Linked</Btn>
                            <Btn>Delete</Btn>
                        </Stack>
                        <Group>
                            <Btn>Join</Btn>
                        </Group>
                        <Row>
                            <Menu label='Set Origin' value='Set Origin' />
                        </Row>
                        <div>
                            <Caption>Shading:</Caption>
                            <Group>
                                <Btn>Smooth</Btn>
                                <Btn>Flat</Btn>
                            </Group>
                        </div>
                        <div>
                            <Caption>Data Transfer:</Caption>
                            <Group>
                                <Btn>Data</Btn>
                                <Btn>Data Layo</Btn>
                            </Group>
                        </div>
                    </Panel>
                    <Panel title='History' />
                </ShelfPanels>
            </ShelfTop>
            <Operator>
                <Panel title='(De)select All' first defaultOpen>
                    <div>
                        <Caption>Action</Caption>
                        <Row>
                            <Menu label='Action' value='Toggle' />
                        </Row>
                    </div>
                </Panel>
            </Operator>
        </Shelf>
    )
}

function TimelineArea() {
    return (
        <Timeline>
            <Grip top />
            <Track aria-label='Frames'>
                <rect x='0' y='0' width={at(0)} height='23' fill='#444' />
                <rect x={at(250)} y='0' width='100%' height='23' fill='#444' />
                {gridFrames.map(f => (
                    <rect
                        key={f}
                        x={at(f)}
                        y='0'
                        width='1'
                        height='23'
                        fill={f < 0 || f > 250 ? (f % 20 ? "#3e3e3e" : "#353535") : f % 20 ? "#686868" : "#5a5a5a"}
                    />
                ))}
                <rect x={at(0)} y='0' width='1' height='23' fill='#1c1c1c' />
                <rect x={at(1)} y='0' width='3' height='23' fill='#60c040' />
            </Track>
            <Ruler>
                <RulerBar>
                    {labelFrames.map(f => (
                        <span key={f}>{f}</span>
                    ))}
                </RulerBar>
                <Knob $side='left' />
                <Knob $side='right' />
            </Ruler>
            <Bar $pad={9} $top={1}>
                <Grip />
                <Editor icon='clock' label='Timeline editor' />
                <MenuItems $gap={21} $after={14}>
                    <button>View</button>
                    <button>Marker</button>
                    <button>Frame</button>
                    <button>Playback</button>
                </MenuItems>
                <Group $width={41}>
                    <Btn $center aria-label='Use preview range'>
                        <Icon name='clockRange' />
                    </Btn>
                    <Btn $center aria-label='Lock time cursor'>
                        <Icon name='lock' />
                    </Btn>
                </Group>
                <Spaced $left={5}>
                    <Group $width={228} $radius={10}>
                        <NumField wide label='Start:' value='1' />
                        <NumField wide label='End:' value='250' />
                    </Group>
                </Spaced>
                <Spaced $left={5}>
                    <Group $width={90} $radius={10}>
                        <NumField wide name='Current frame' value='1' />
                    </Group>
                </Spaced>
                <Spaced $left={15}>
                    <Group $width={120}>
                        {transport.map(name => (
                            <Btn key={name} $center aria-label={name}>
                                <Icon name={name} />
                            </Btn>
                        ))}
                    </Group>
                </Spaced>
                <Spaced $left={5}>
                    <Menu width={115} label='Sync mode' value='No Sync' />
                </Spaced>
                <Spaced $left={16}>
                    <Group $width={20}>
                        <Btn $center aria-label='Auto keyframe'>
                            <Icon name='record' />
                        </Btn>
                    </Group>
                </Spaced>
                <Spaced $left={5}>
                    <Group $width={171}>
                        <KeyField>
                            <Icon name='keys' />
                            <input aria-label='Keying set' />
                        </KeyField>
                        <Btn $width={20} $center aria-label='Insert keyframe'>
                            <Icon name='key' />
                        </Btn>
                        <Btn $width={20} $center aria-label='Delete keyframe'>
                            <Icon name='keyOff' />
                        </Btn>
                    </Group>
                </Spaced>
            </Bar>
        </Timeline>
    )
}

function OutlinerArea() {
    return (
        <Outliner>
            <Bar $pad={9} $top={1}>
                <Grip top />
                <Editor icon='tree' label='Outliner editor' />
                <MenuItems $gap={21} $after={13}>
                    <button>View</button>
                    <button>Search</button>
                </MenuItems>
                <Menu width={90} label='Display mode' value='All Scenes' />
            </Bar>
            <OutlinerBody>
                <TreeList>
                    {treeRows.map((row, i) => (
                        <TreeRow key={row.name} $odd={i % 2 === 1}>
                            <Expander viewBox='0 0 41 20' aria-hidden='true'>
                                <path d={row.node ? "M27.500 0v20M28 9.500h13" : "M27.500 0v20"} stroke='#444' fill='none' />
                                {row.node && (
                                    <>
                                        <circle cx='28' cy='9.500' r='3.800' fill='#ddd' stroke='#222' />
                                        <path d={i === 0 ? "M26 9.500h4" : "M26 9.500h4M28 7.500v4"} stroke='#111' />
                                    </>
                                )}
                            </Expander>
                            <TreeLabel>
                                <Icon name={row.icon} />
                                {row.text}
                            </TreeLabel>
                            <button aria-label={`${row.name} visible`}>{row.toggles && <Icon name='eye' />}</button>
                            <button aria-label={`${row.name} selectable`}>{row.toggles && <Icon name='pointer' />}</button>
                            <button aria-label={`${row.name} renderable`}>{row.toggles && <Icon name='photo' />}</button>
                        </TreeRow>
                    ))}
                </TreeList>
                <ScrollV $thumb='31px' $offset={13}>
                    <i />
                </ScrollV>
            </OutlinerBody>
            <ScrollH>
                <i />
            </ScrollH>
            <Grip />
        </Outliner>
    )
}

function PropertiesArea() {
    return (
        <Properties>
            <Bar $pad={9}>
                <Grip top />
                <Editor icon='sliders' label='Properties editor' />
                <TabStrip>
                    {["photo", "images", "scene", "globe", "cube", "link", "wrench"].map(name => (
                        <button key={name} aria-label={`${name} tab`}>
                            <Icon name={name} />
                        </button>
                    ))}
                </TabStrip>
            </Bar>
            <PropsBody>
                <PropsList>
                    <Crumb>
                        <Icon name='pin' />
                        <Icon name='scene' />
                        <span>Scene</span>
                    </Crumb>
                    <Panel title='Render' defaultOpen>
                        <Group>
                            <Btn $center $grow={46}>
                                <Icon name='photoNew' />
                                Rend
                            </Btn>
                            <Btn $center $grow={48}>
                                <Icon name='clapper' />
                                Anim
                            </Btn>
                            <Btn $center $grow={51}>
                                <Icon name='speaker' />
                                Audio
                            </Btn>
                        </Group>
                        <Row>
                            <DisplayLabel>Display</DisplayLabel>
                            <Group $grow>
                                <Menu inner label='Display' value='Image E...' />
                                <Btn $width={20} $center aria-label='Lock interface'>
                                    <Icon name='unlock' />
                                </Btn>
                            </Group>
                        </Row>
                    </Panel>
                    <Panel title='Dimensions' defaultOpen>
                        <Group>
                            <Menu inner label='Render Presets' value='Render Presets' />
                            <Btn $width={20} $center aria-label='Add preset'>
                                <Icon name='plus' />
                            </Btn>
                            <Btn $width={20} $center aria-label='Remove preset'>
                                <Icon name='minus' />
                            </Btn>
                        </Group>
                        <TwoColumns>
                            <div>
                                <Caption>Resolution:</Caption>
                                <NumStack $column $radius={9}>
                                    <NumField center name='Resolution X' value='1920 p' />
                                    <NumField center name='Resolution Y' value='1080 p' />
                                    <SliderBox>
                                        <input type='range' aria-label='Resolution percentage' defaultValue='50' />
                                        <span>50%</span>
                                    </SliderBox>
                                </NumStack>
                                <Caption>Aspect Rat</Caption>
                                <NumStack $column $radius={9}>
                                    <NumField center name='Aspect X' value=': 1.000' />
                                    <NumField center name='Aspect Y' value=': 1.000' />
                                </NumStack>
                                <TickRow>
                                    <Tick type='checkbox' aria-label='Border' />
                                    <Tick type='checkbox' aria-label='Crop' disabled />
                                </TickRow>
                            </div>
                            <div>
                                <Caption>Frame Ra...</Caption>
                                <NumStack $column $radius={9}>
                                    <NumField center text name='Start frame' value='Start: 1' />
                                    <NumField center name='End frame' value='En:250' />
                                    <NumField center name='Frame step' value='Fram:1' />
                                </NumStack>
                                <Caption>Frame Rate:</Caption>
                                <Row>
                                    <Menu label='Frame Rate' value='24 fps' />
                                </Row>
                                <Caption>Time Rem...</Caption>
                                <Group $radius={9}>
                                    <NumField name='Old' value='' />
                                    <NumField name='New' center value='1' />
                                </Group>
                            </div>
                        </TwoColumns>
                    </Panel>
                    <Panel title='Anti-Aliasing' check='on' gap={2} defaultOpen>
                        <TwoColumns>
                            <Group>
                                {[5, 8, 11, 16].map(n => (
                                    <ChoiceButton key={n} $active={n === 8}>
                                        {n}
                                    </ChoiceButton>
                                ))}
                            </Group>
                            <Row>
                                <Menu label='Filter' value='Mitchell-' />
                            </Row>
                        </TwoColumns>
                        <TwoColumns>
                            <TickLabel>
                                <Tick type='checkbox' />
                                Full Sa
                            </TickLabel>
                            <Group $radius={10}>
                                <NumField center name='Filter size' value='1.000 p' />
                            </Group>
                        </TwoColumns>
                    </Panel>
                    <Panel title='Sampled Motion Blur' check='off' />
                    <Panel title='Shading' />
                    <Panel title='Performance' />
                    <Panel title='Post Processing' />
                    <Panel title='Metadata' />
                    <Panel title='Output' defaultOpen />
                </PropsList>
                <ScrollV $thumb='72%'>
                    <i />
                </ScrollV>
            </PropsBody>
            <Grip />
        </Properties>
    )
}

const IdBlock = ({ icon, label, value }) => (
    <Group $width={191}>
        <Editor inner icon={icon} label={label} />
        <TextField aria-label={label} defaultValue={value} />
        <Btn $width={20} $center aria-label={`Add ${label}`}>
            <Icon name='plus' />
        </Btn>
        <Btn $width={20} $center aria-label={`Delete ${label}`}>
            <Icon name='cross' />
        </Btn>
    </Group>
)

export default function App() {
    return (
        <Window>
            <GlobalStyle />
            <Frame>
                <TitleBar>
                    <Icon name='blender' />
                    <h1>Blender</h1>
                    <WindowButtons>
                        <button aria-label='Minimize'>
                            <Svg viewBox='0 0 10 10' $w={10} $h={10}>
                                <path d='M1 7h8v2H1z' fill='#1e1e1e' />
                            </Svg>
                        </button>
                        <button aria-label='Maximize'>
                            <Svg viewBox='0 0 10 8' $w={10} $h={8}>
                                <path d='M0 0h10v8H0zM1 2v5h8V2z' fillRule='evenodd' fill='#1e1e1e' />
                            </Svg>
                        </button>
                        <button aria-label='Close'>
                            <Svg viewBox='0 0 8 8' $w={8} $h={8}>
                                <path d='m.5.5 7 7m0-7-7 7' stroke='#fff' strokeWidth='1.700' />
                            </Svg>
                        </button>
                    </WindowButtons>
                </TitleBar>
                <AppFrame>
                    <Bar $line $top={2}>
                        <Grip />
                        <Grip top />
                        <Editor icon='info' label='Info editor' />
                        <MenuItems $gap={21} $after={13}>
                            <button>File</button>
                            <button>Render</button>
                            <button>Window</button>
                            <button>Help</button>
                        </MenuItems>
                        <IdBlock icon='layout' label='Screen layout' value='Default' />
                        <Spaced $left={6}>
                            <IdBlock icon='scene' label='Scene' value='Scene' />
                        </Spaced>
                        <Spaced $left={17}>
                            <Menu width={111} label='Render engine' value='Blender Render' />
                        </Spaced>
                        <Spaced $left={18}>
                            <Icon name='blender' />
                        </Spaced>
                        <Status>
                            v2.76 | Verts:8 | Faces:2 | Tris:4 | Objects:2/4 | Lamps:0/1 | Mem:16.56M | Plane.001
                        </Status>
                    </Bar>
                    <Workspace>
                        <MainArea>
                            <EditArea>
                                <ToolShelf />
                                <Viewport>
                                    <Drawing />
                                    <Grip top />
                                    <ViewName>Front Persp</ViewName>
                                    <ObjectName>(1) Plane.001</ObjectName>
                                    <RegionToggle aria-label='Show properties region'>
                                        <Svg viewBox='0 0 7 7' $w={7} $h={7}>
                                            <path d='M3.500 0v7M0 3.500h7' stroke='#999' strokeWidth='1.500' />
                                        </Svg>
                                    </RegionToggle>
                                </Viewport>
                            </EditArea>
                            <OperatorLine>
                                <Grip />
                                D: -0.1585 (0.1585) global
                            </OperatorLine>
                            <TimelineArea />
                        </MainArea>
                        <Side>
                            <OutlinerArea />
                            <PropertiesArea />
                        </Side>
                    </Workspace>
                </AppFrame>
            </Frame>
            <Taskbar>
                <i />
                <i />
                <i />
                <i />
                <i />
            </Taskbar>
        </Window>
    )
}
